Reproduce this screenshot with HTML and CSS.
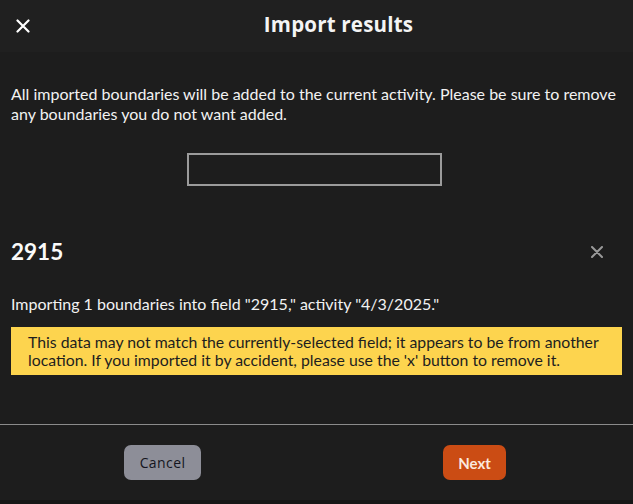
FILE: index.html
```html
<!DOCTYPE html>
<html>
<head>
<meta charset="utf-8">
<link rel="stylesheet" href="styles.css">
</head>
<body>
<div class="dialog">
  <header class="hdr">
    <button class="close" aria-label="Close">
      <svg width="14" height="14" viewBox="0 0 14 14"><path d="M1.5 1.5L12.5 12.5M12.5 1.5L1.5 12.5" stroke="#fff" stroke-width="2.2" stroke-linecap="round"/></svg>
    </button>
    <h1 class="title">Import results</h1>
  </header>
  <main class="content">
    <p class="intro">All imported boundaries will be added to the current activity. Please be sure to remove any boundaries you do not want added.</p>
    <div class="boxwrap"><div class="emptybox"></div></div>
    <div class="fieldrow">
      <h2 class="fieldname">2915</h2>
      <button class="remove" aria-label="Remove">
        <svg width="12" height="12" viewBox="0 0 12 12"><path d="M1 1L11 11M11 1L1 11" stroke="#9a9a9a" stroke-width="2" stroke-linecap="round"/></svg>
      </button>
    </div>
    <p class="info">Importing 1 boundaries into field "2915," activity "4/3/2025."</p>
    <div class="warn">This data may not match the currently-selected field; it appears to be from another location. If you imported it by accident, please use the 'x' button to remove it.</div>
  </main>
  <footer class="foot">
    <button class="btn cancel">Cancel</button>
    <button class="btn next">Next</button>
  </footer>
</div>
</body>
</html>
```
FILE: styles.css
```css
html, body {
  margin: 0;
  padding: 0;
  background: #1c1c1c;
}
body {
  width: 633px;
  height: 504px;
  overflow: hidden;
  font-family: Lato, "Liberation Sans", sans-serif;
  color: #fff;
}
.dialog {
  width: 633px;
  height: 504px;
  display: flex;
  flex-direction: column;
  background: #1d1d1d;
  border-bottom: 4px solid #161616;
  box-sizing: border-box;
}
.hdr {
  height: 52px;
  background: #202020;
  display: flex;
  align-items: center;
  flex-shrink: 0;
}
.close {
  background: none;
  border: 0;
  padding: 0;
  margin-left: 16px;
  width: 14px;
  height: 14px;
  display: flex;
  cursor: pointer;
}
.title {
  flex: 1;
  margin: 0 0 4px 0;
  padding-left: 14px;
  text-align: center;
  font-family: "Open Sans", Lato, sans-serif;
  font-weight: 700;
  font-size: 20.5px;
  letter-spacing: 0.2px;
  color: #f4f4f4;
}
.content {
  flex: 1;
  padding: 32px 11px 0 11px;
}
.intro {
  margin: 0;
  font-size: 16px;
  line-height: 20px;
  color: #f2f2f2;
}
.boxwrap {
  display: flex;
  justify-content: center;
  margin-top: 29px;
}
.emptybox {
  width: 251px;
  height: 29px;
  border: 2px solid #9b9b9b;
  margin-left: -4px;
}
.fieldrow {
  display: flex;
  justify-content: space-between;
  align-items: center;
  margin-top: 52px;
  padding-right: 19px;
}
.fieldname {
  margin: 0;
  font-size: 22.5px;
  font-weight: 700;
  line-height: 28px;
  color: #fafafa;
}
.remove {
  background: none;
  border: 0;
  padding: 0;
  width: 12px;
  height: 12px;
  display: flex;
}
.info {
  margin: 28px 0 0 0;
  font-size: 16px;
  line-height: 20px;
  color: #f2f2f2;
}
.warn {
  margin-top: 13px;
  background: #fdd44e;
  color: #1e1e1e;
  font-size: 15.8px;
  line-height: 18px;
  padding: 6px 10px 6px 17px;
}
.foot {
  flex-shrink: 0;
  height: 76px;
  border-top: 1px solid #8b8b8b;
  display: flex;
  align-items: flex-start;
  padding-top: 20px;
  box-sizing: border-box;
}
.btn {
  height: 35px;
  border: 0;
  border-radius: 7px;
  font-size: 14.5px;
  font-family: Lato, sans-serif;
  cursor: pointer;
}
.cancel {
  margin-left: 124px;
  width: 77px;
  background: #8d8e98;
  color: #141520;
  font-family: "Open Sans", Lato, sans-serif;
  font-size: 14px;
  letter-spacing: 0.4px;
}
.next {
  margin-left: 242px;
  width: 63px;
  background: #cb4c14;
  color: #fbe9df;
  font-weight: 700;
  font-size: 15px;
}
```
